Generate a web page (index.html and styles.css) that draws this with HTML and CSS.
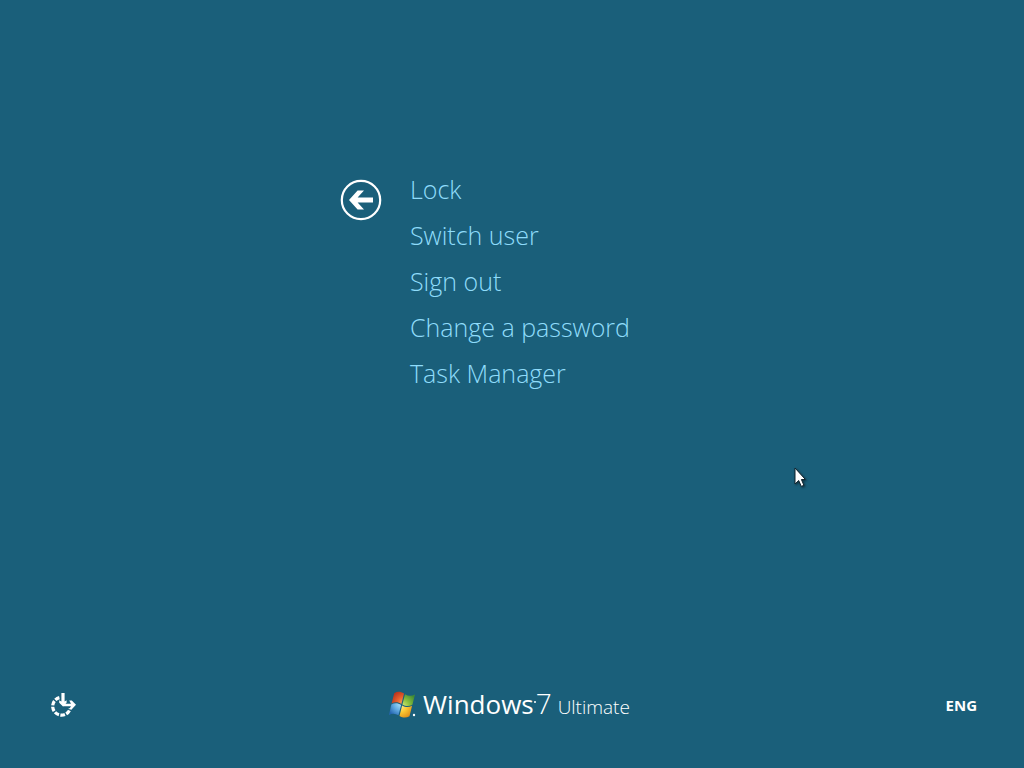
FILE: index.html
```html
<!DOCTYPE html>
<html lang="en">
<head>
    <meta charset="UTF-8">
    <meta name="viewport" content="width=device-width, initial-scale=1.0">
    <title>Windows Security</title>
    <link rel="stylesheet" href="styles.css">
</head>
<body>
    <main class="security">
        <button class="back" type="button" aria-label="Back">
            <svg width="42" height="42" viewBox="0 0 42 42">
                <circle cx="21" cy="21" r="19.2" fill="none" stroke="#fff" stroke-width="2.2"/>
                <path d="M9 21l8.6-9.6h6.4L17.6 18.4H33v5.2H17.6l6.4 7h-6.4z" fill="#fff"/>
            </svg>
        </button>
        <ul class="options">
            <li><button type="button">Lock</button></li>
            <li><button type="button">Switch user</button></li>
            <li><button type="button">Sign out</button></li>
            <li><button type="button">Change a password</button></li>
            <li><button type="button">Task Manager</button></li>
        </ul>
    </main>

    <footer class="bar">
        <button class="ease" type="button" aria-label="Ease of access">
            <svg width="26" height="26" viewBox="0 0 26 26">
                <path d="M9.4 5.6A8.9 8.9 0 1 0 20.2 16.4" fill="none" stroke="#fff" stroke-width="3.2" stroke-dasharray="4.7 1.4"/>
                <path d="M11.4 1h3.2v8.6l2-1.4v2.6L13 14.4 9.2 10.8V8.2l2.2 1.4z" fill="#fff"/>
                <path d="M13 11.8h8L19.2 8.4h2.6l4.2 4.4-4.2 4.4h-2.6l1.8-3h-8z" fill="#fff"/>
            </svg>
        </button>
        <div class="brand">
            <svg class="flag" width="28" height="28" viewBox="0 0 28 28">
                <defs>
                    <radialGradient id="red" cx="1" cy="1" r="1.2">
                        <stop offset="0" stop-color="#ffb066"/>
                        <stop offset=".5" stop-color="#e8602c"/>
                        <stop offset="1" stop-color="#b5301c"/>
                    </radialGradient>
                    <radialGradient id="green" cx="0" cy="1" r="1.2">
                        <stop offset="0" stop-color="#d4ec72"/>
                        <stop offset=".5" stop-color="#86bd3c"/>
                        <stop offset="1" stop-color="#3f8a35"/>
                    </radialGradient>
                    <radialGradient id="blue" cx="1" cy="0" r="1.2">
                        <stop offset="0" stop-color="#b5e6fb"/>
                        <stop offset=".5" stop-color="#65afe4"/>
                        <stop offset="1" stop-color="#2465b0"/>
                    </radialGradient>
                    <radialGradient id="yellow" cx="0" cy="0" r="1.2">
                        <stop offset="0" stop-color="#fff0a0"/>
                        <stop offset=".5" stop-color="#fcc832"/>
                        <stop offset="1" stop-color="#df8b18"/>
                    </radialGradient>
                </defs>
                <path d="M5.2 2.2C8.4 .2 11.6 .4 15 2.6L12.4 12.9C9.2 10.9 6 10.7 2.6 12.5z" fill="url(#red)"/>
                <path d="M16 3.2C19.4 5.2 22.6 5.2 26 3.4L23.4 13.7C20 15.5 16.8 15.4 13.4 13.4z" fill="url(#green)"/>
                <path d="M2.3 13.6C5.6 11.8 8.8 12 12.1 14L9.5 24.3C6.3 22.3 3.1 22.1 0 23.9z" fill="url(#blue)"/>
                <path d="M13.1 14.5C16.5 16.5 19.7 16.6 23.1 14.8L20.5 25.2C17.1 27 13.9 26.9 10.5 24.9z" fill="url(#yellow)"/>
                <circle cx="25" cy="24" r="1.2" fill="#fff"/>
            </svg>
            <span class="name">Windows</span>
            <span class="dot"></span>
            <span class="version">7</span>
            <span class="edition">Ultimate</span>
        </div>
        <button class="lang" type="button">ENG</button>
    </footer>

    <svg class="cursor" width="14" height="21" viewBox="0 0 14 21">
        <path d="M1 1v16l3.7-3.5L7.3 19.4l2.6-1.1-2.5-5.8h4z" fill="#fff" stroke="#10242e" stroke-width="1"/>
    </svg>
</body>
</html>
```

FILE: styles.css
```css
* {
    box-sizing: border-box;
}
body {
    margin: 0;
    min-height: 100vh;
    display: flex;
    flex-direction: column;
    background-color: #1a5f7a;
    color: #fff;
    font-family: 'Open Sans', 'Noto Sans', sans-serif;
    overflow: hidden;
}
button {
    padding: 0;
    border: none;
    background: none;
    color: inherit;
    font: inherit;
    cursor: pointer;
}
svg {
    display: block;
}
.security {
    flex: 1;
    display: flex;
    align-items: flex-start;
    gap: 28px;
    padding: 166px 24px 0 33.2%;
}
.back {
    margin-top: 13px;
}
.options {
    margin: 0;
    padding: 0;
    list-style: none;
}
.options li {
    height: 46px;
}
.options button {
    color: #8fdcfa;
    font-size: 25px;
    font-weight: 300;
    line-height: 46px;
    white-space: nowrap;
}
.options button:hover {
    color: #fff;
}
.bar {
    display: grid;
    grid-template-columns: 1fr auto 1fr;
    align-items: center;
    padding: 0 47px 38px 50px;
}
.ease {
    justify-self: start;
}
.brand {
    display: flex;
    align-items: baseline;
    padding-right: 8px;
    line-height: 46px;
}
.flag {
    align-self: center;
    margin-right: 6px;
}
.name {
    font-size: 26px;
    font-weight: 400;
}
.dot {
    align-self: center;
    width: 2px;
    height: 2px;
    margin-bottom: 6px;
    border-radius: 50%;
    background-color: #fff;
}
.version {
    font-size: 28px;
    font-weight: 300;
}
.edition {
    margin-left: 6px;
    font-size: 19px;
    font-weight: 300;
}
.lang {
    justify-self: end;
    font-size: 15px;
    font-weight: 700;
}
.cursor {
    position: absolute;
    top: 467px;
    left: 794px;
    filter: drop-shadow(1px 1px 1px rgba(0, 0, 0, 0.5));
}
```
